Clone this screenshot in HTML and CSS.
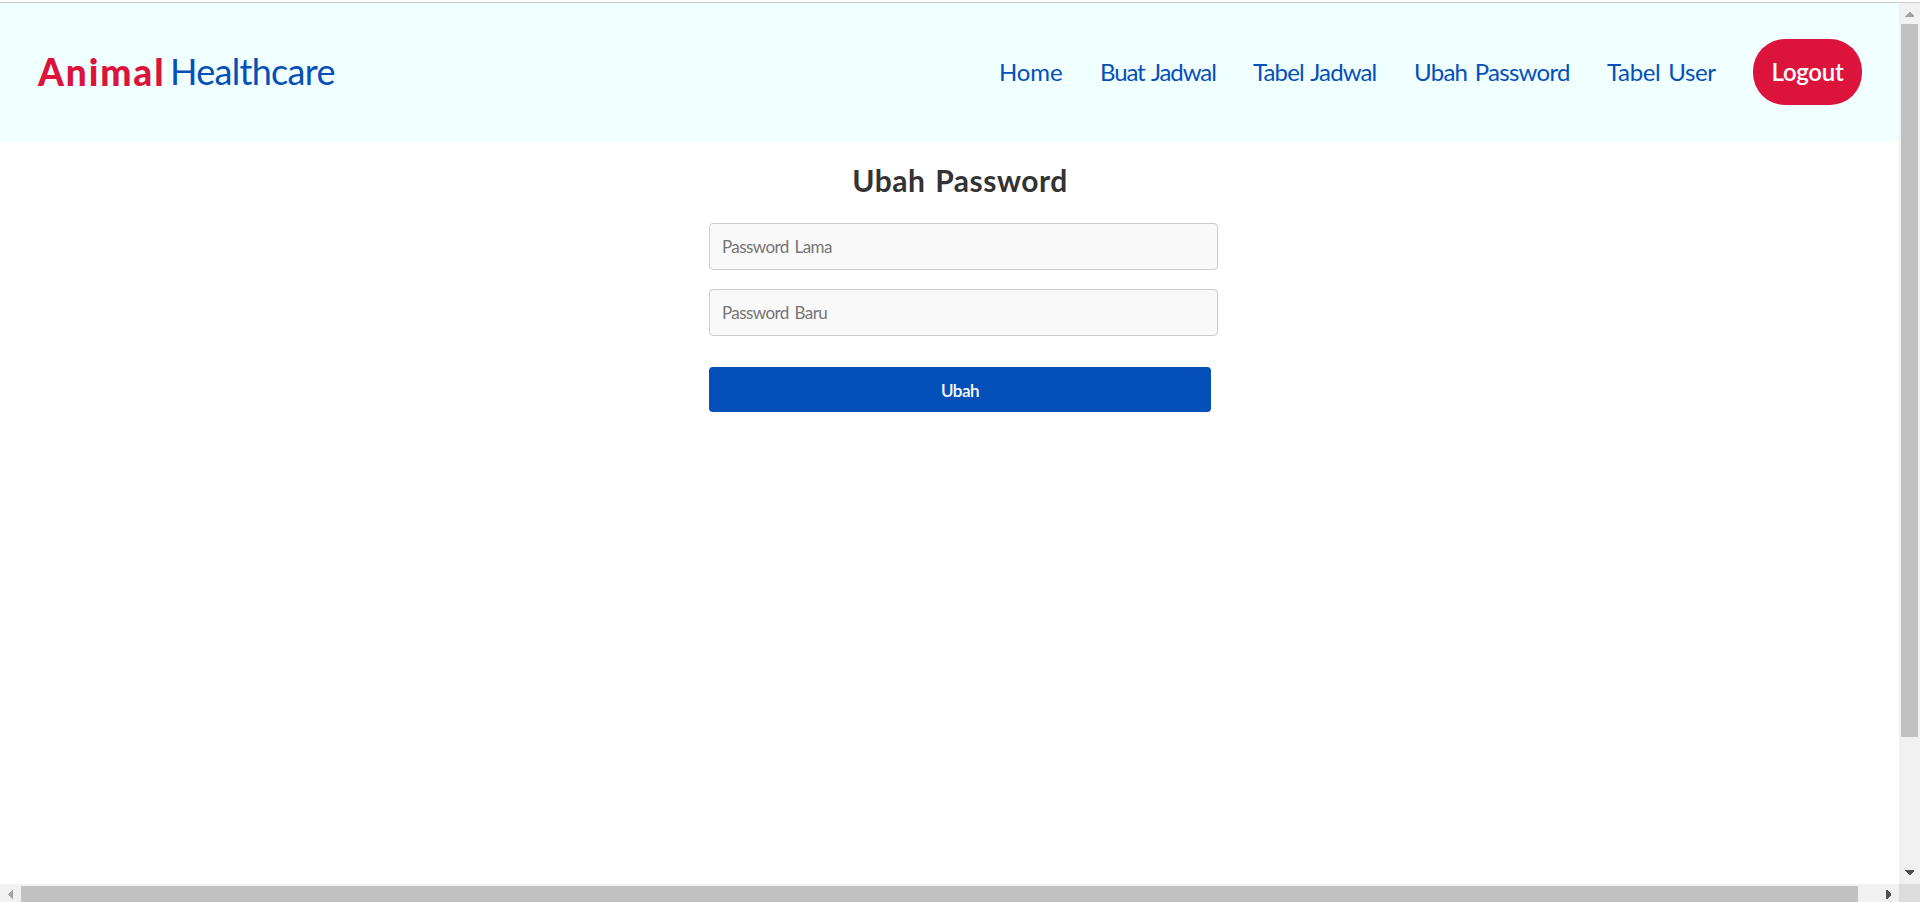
FILE: index.html
```html
<!DOCTYPE html>
<html lang="id">
<head>
<meta charset="utf-8">
<title>Ubah Password</title>
<link rel="stylesheet" href="styles.css">
</head>
<body>
<div class="window">
  <div class="viewport">
    <header class="header">
      <a class="logo"><span class="logo-bold">Animal</span><span class="logo-light">Healthcare</span></a>
      <nav class="nav">
        <a class="link home">Home</a>
        <a class="link make">Buat Jadwal</a>
        <a class="link table">Tabel Jadwal</a>
        <a class="link password">Ubah Password</a>
        <a class="link user">Tabel User</a>
        <a class="logout">Logout</a>
      </nav>
    </header>
    <main class="main">
      <h1 class="title">Ubah Password</h1>
      <form class="form">
        <input class="field" type="password" placeholder="Password Lama">
        <input class="field" type="password" placeholder="Password Baru">
        <button class="submit" type="button">Ubah</button>
      </form>
    </main>
  </div>
  <div class="vbar">
    <svg class="arrow-up" width="9" height="5" viewBox="0 0 9 5" shape-rendering="crispEdges"><path d="M0 5V4L4 0h1l4 4v1z" fill="#a3a3a3"/></svg>
    <div class="vthumb"></div>
    <svg class="arrow-down" width="9" height="5" viewBox="0 0 9 5" shape-rendering="crispEdges"><path d="M0 0v1l4 4h1l4-4V0z" fill="#505050"/></svg>
  </div>
  <div class="hbar">
    <svg class="arrow-left" width="5" height="9" viewBox="0 0 5 9" shape-rendering="crispEdges"><path d="M5 0H4L0 4v1l4 4h1z" fill="#a3a3a3"/></svg>
    <div class="hthumb"></div>
    <svg class="arrow-right" width="5" height="9" viewBox="0 0 5 9" shape-rendering="crispEdges"><path d="M0 0h1l4 4v1L1 9H0z" fill="#505050"/></svg>
  </div>
  <div class="corner"></div>
</div>
</body>
</html>
```
FILE: styles.css
```css
* { box-sizing: border-box; }
body {
  margin: 0;
  overflow: hidden;
  background: #fff;
  font-family: "Gill Sans", "Gill Sans MT", Lato, sans-serif;
}
.window {
  display: grid;
  grid-template: 881px 18px / 1899px 21px;
  height: 902px;
  padding-top: 3px;
  background: linear-gradient(#ccc, #ccc) 0 2px / 100% 1px no-repeat;
}
.header {
  display: flex;
  align-items: flex-start;
  justify-content: space-between;
  height: 138px;
  padding: 36px 37px 0 38px;
  background: #f0ffff;
}
.logo {
  display: flex;
  gap: 6px;
  font-size: 36px;
  line-height: 65px;
}
.logo-bold { width: 126px; color: #dc143c; font-weight: 900; font-size: 37px; letter-spacing: 1.9px; }
.logo-light { color: #054fb9; letter-spacing: -0.7px; }
.nav { display: flex; color: #054fb9; font-size: 24px; line-height: 65px; }
.link { margin-right: 37px; white-space: nowrap; word-spacing: 2px; }
.home { width: 65px; letter-spacing: -0.1px; }
.make { width: 116px; margin-left: -1px; letter-spacing: -1.1px; }
.table { width: 124px; letter-spacing: -0.88px; }
.password { width: 156px; letter-spacing: -0.72px; }
.user { width: 109px; letter-spacing: -0.35px; }
.logout {
  width: 109px;
  height: 66px;
  border-radius: 32px;
  background: #dc143c;
  color: #fff;
  font-weight: 600;
  line-height: 66px;
  letter-spacing: -0.3px;
  text-align: center;
}
.title {
  margin: 19px 0 0 21px;
  color: #333;
  font-size: 30px;
  line-height: 40px;
  letter-spacing: 0.5px;
  word-spacing: 2px;
  text-align: center;
}
.form { display: flex; flex-direction: column; width: 509px; margin: 23px 0 0 709px; }
.field {
  height: 47px;
  margin-bottom: 19px;
  padding: 0 12px;
  border: 1px solid #ccc;
  border-radius: 4px;
  background: #f9f9f9;
  font: 17px "Gill Sans", "Gill Sans MT", Lato, sans-serif;
  letter-spacing: -0.57px;
  word-spacing: 2px;
}
.field::placeholder { color: #757575; }
.submit {
  width: 502px;
  height: 45px;
  margin-top: 12px;
  padding: 1px 0 0;
  border: 0;
  border-radius: 4px;
  background: #054fb9;
  color: #fff;
  font: 600 17px "Gill Sans", "Gill Sans MT", Lato, sans-serif;
  letter-spacing: -0.5px;
}
.vbar, .hbar { display: flex; align-items: center; background: #f1f1f1; }
.vbar { flex-direction: column; padding-top: 9px; }
.vthumb { width: 17px; height: 713px; margin: 7px 0 133px; background: #c1c1c1; }
.hbar { padding: 2px 0 0 8px; }
.hthumb { width: 1837px; height: 16px; margin: 0 28px 0 8px; background: #c1c1c1; }
.corner { background: #dcdcdc; }
```
